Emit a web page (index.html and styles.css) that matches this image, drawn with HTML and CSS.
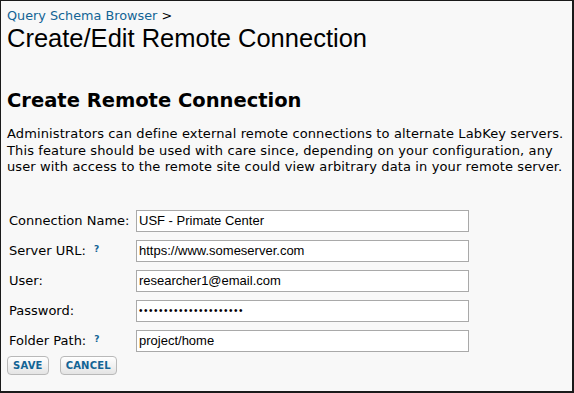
FILE: index.html
```html
<!DOCTYPE html>
<html>
<head>
<meta charset="utf-8">
<link rel="stylesheet" href="styles.css">
</head>
<body>
<div class="frame">
  <div class="crumb"><a class="crumb-link">Query Schema Browser</a> &gt;</div>
  <h1 class="title">Create/Edit Remote Connection</h1>
  <h2 class="section">Create Remote Connection</h2>
  <p class="intro">Administrators can define external remote connections to alternate LabKey servers. This feature should be used with care since, depending on your configuration, any user with access to the remote site could view arbitrary data in your remote server.</p>
  <div class="form">
    <label class="lbl">Connection Name:</label>
    <div class="field">USF - Primate Center</div>
    <label class="lbl">Server URL:<span class="help">?</span></label>
    <div class="field">https://www.someserver.com</div>
    <label class="lbl">User:</label>
    <div class="field">researcher1@email.com</div>
    <label class="lbl">Password:</label>
    <div class="field pw">&#8226;&#8226;&#8226;&#8226;&#8226;&#8226;&#8226;&#8226;&#8226;&#8226;&#8226;&#8226;&#8226;&#8226;&#8226;&#8226;&#8226;&#8226;&#8226;&#8226;&#8226;</div>
    <label class="lbl">Folder Path:<span class="help">?</span></label>
    <div class="field">project/home</div>
  </div>
  <div class="buttons">
    <span class="btn">SAVE</span>
    <span class="btn">CANCEL</span>
  </div>
</div>
</body>
</html>
```

FILE: styles.css
```css
html, body {
  margin: 0;
  padding: 0;
}
.frame {
  box-sizing: border-box;
  width: 574px;
  height: 393px;
  border-style: solid;
  border-color: #1a1a1a;
  border-width: 1px 2px 2px 1px;
  background: #f8f8f8;
  padding: 7px 0 0 6px;
  font-family: "DejaVu Sans", Verdana, sans-serif;
  color: #000;
}
.crumb {
  font-size: 12.8px;
  line-height: 16px;
  color: #000;
}
.crumb-link {
  color: #126495;
}
.title {
  margin: 0;
  font-family: "Liberation Sans", Arial, sans-serif;
  font-weight: normal;
  font-size: 25.5px;
  line-height: 28px;
}
.section {
  margin: 38px 0 0 0;
  font-size: 19.5px;
  line-height: 22px;
  font-weight: bold;
}
.intro {
  margin: 14px 0 0 0;
  font-size: 13px;
  line-height: 16.5px;
  letter-spacing: 0.12px;
}
.form {
  margin-top: 34px;
  display: grid;
  grid-template-columns: 127px 333px;
  row-gap: 8px;
  padding-left: 2px;
}
.lbl {
  font-size: 13px;
  line-height: 22px;
  white-space: nowrap;
  display: flex;
  align-items: flex-start;
}
.help {
  color: #126495;
  font-size: 9px;
  font-weight: bold;
  line-height: 10px;
  margin: 4px 0 0 8px;
}
.field {
  box-sizing: border-box;
  height: 22px;
  border: 1px solid #a9a9a9;
  background: #fff;
  font-family: "Liberation Sans", Arial, sans-serif;
  font-size: 13px;
  line-height: 20px;
  padding-left: 2px;
}
.pw {
  font-size: 10px;
  letter-spacing: 1.5px;
}
.buttons {
  margin-top: 4px;
  display: flex;
  gap: 11px;
}
.btn {
  box-sizing: border-box;
  height: 19px;
  padding: 0 5px;
  border: 1px solid #b9b9b9;
  border-radius: 4px;
  background: linear-gradient(#ffffff, #e4e4e4);
  color: #126495;
  font-size: 10px;
  font-weight: bold;
  line-height: 17px;
  letter-spacing: 0.2px;
}
```
